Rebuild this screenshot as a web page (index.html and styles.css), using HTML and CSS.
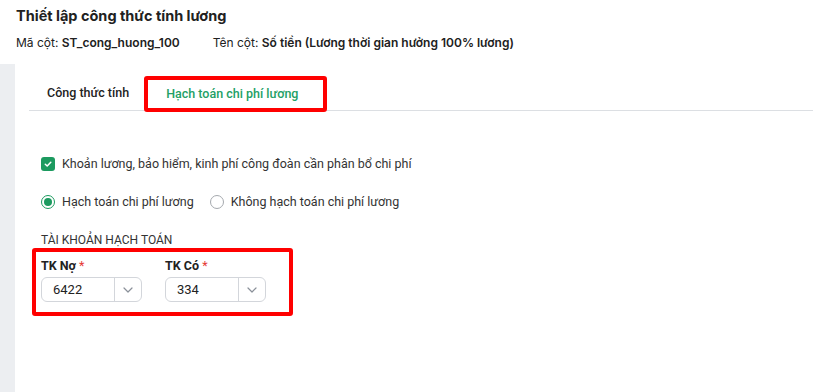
FILE: index.html
```html
<!DOCTYPE html>
<html>
<head>
	<title>Thiết lập công thức tính lương</title>
	<meta charset="utf-8">
	<link rel="stylesheet" href="styles.css">
</head>
<body>

	<div class="header">
		<h1 class="title">Thiết lập công thức tính lương</h1>
		<div class="meta">
			<span class="meta-item">Mã cột: <b>ST_cong_huong_100</b></span>
			<span class="meta-item">Tên cột: <b>Số tiền (Lương thời gian hưởng 100% lương)</b></span>
		</div>
	</div>

	<div class="main">
		<div class="strip"></div>
		<div class="panel">
			<div class="tabs">
				<div class="tab">Công thức tính</div>
				<div class="tab tab-active mark">Hạch toán chi phí lương</div>
			</div>

			<div class="content">
				<label class="check-row">
					<span class="checkbox">
						<svg width="10" height="10" viewBox="0 0 10 10"><path d="M2.3 5.2 L4.2 7 L7.8 3.2" fill="none" stroke="#fff" stroke-width="1.5" stroke-linecap="round" stroke-linejoin="round"/></svg>
					</span>
					Khoản lương, bảo hiểm, kinh phí công đoàn cần phân bổ chi phí
				</label>

				<div class="radio-row">
					<label class="radio-item"><span class="radio radio-on"></span>Hạch toán chi phí lương</label>
					<label class="radio-item"><span class="radio"></span>Không hạch toán chi phí lương</label>
				</div>

				<div class="section-label">TÀI KHOẢN HẠCH TOÁN</div>

				<div class="fields mark">
					<div class="field">
						<div class="field-label">TK Nợ <span class="req">*</span></div>
						<div class="select">
							<span class="select-value">6422</span>
							<span class="select-arrow">
								<svg width="10" height="6" viewBox="0 0 10 6"><path d="M1 1 L5 5 L9 1" fill="none" stroke="#8a9099" stroke-width="1.2" stroke-linecap="round" stroke-linejoin="round"/></svg>
							</span>
						</div>
					</div>
					<div class="field">
						<div class="field-label">TK Có <span class="req">*</span></div>
						<div class="select">
							<span class="select-value">334</span>
							<span class="select-arrow">
								<svg width="10" height="6" viewBox="0 0 10 6"><path d="M1 1 L5 5 L9 1" fill="none" stroke="#8a9099" stroke-width="1.2" stroke-linecap="round" stroke-linejoin="round"/></svg>
							</span>
						</div>
					</div>
				</div>
			</div>
		</div>
	</div>

</body>
</html>
```

FILE: styles.css
```css
body {
	margin: 0;
	font-family: Inter, "Noto Sans", sans-serif;
	color: #212121;
	background: #fff;
	height: 392px;
	overflow: hidden;
}

/* header */
.header { padding: 6px 16px 13px; }
.title { margin: 0 0 9px; font-size: 14.5px; line-height: 20px; font-weight: 700; }
.meta { display: flex; gap: 33px; font-size: 12px; line-height: 16px; }
.meta b { font-weight: 600; }

/* main area */
.main { display: flex; height: 328px; }
.strip { width: 15px; background: #eceef1; }
.panel { flex: 1; padding-top: 12px; font-family: Roboto, "Liberation Sans", sans-serif; }

.tabs {
	display: flex;
	align-items: flex-start;
	height: 34px;
	margin-left: 14px;
	border-bottom: 1px solid #dcdfe3;
}
.tab {
	padding: 0 15px 0 18px;
	font-size: 12.5px;
	line-height: 34px;
	font-weight: 500;
	color: #222;
}
.tab-active {
	color: #23a066;
	line-height: 28px;
	padding: 0 25px 0 18px;
}

/* red annotation frames */
.mark { border: 4px solid #f00; border-radius: 3px; }

.content { padding: 43px 0 0 26px; font-size: 12.5px; color: #333; }

.check-row { display: flex; align-items: center; gap: 7px; line-height: 20px; }
.checkbox {
	width: 14px; height: 14px; border-radius: 3px;
	background: #1c9a5f;
	display: flex; align-items: center; justify-content: center;
}

.radio-row { display: flex; gap: 16px; margin-top: 18px; line-height: 20px; }
.radio-item { display: flex; align-items: center; gap: 7px; }
.radio {
	width: 14px; height: 14px; box-sizing: border-box;
	border-radius: 50%; border: 1px solid #a5a9ae;
	display: flex; align-items: center; justify-content: center;
}
.radio-on { border-color: #1c9a5f; }
.radio-on::after { content: ""; width: 8px; height: 8px; border-radius: 50%; background: #1c9a5f; }

.section-label { margin-top: 20px; font-size: 12px; line-height: 16px; color: #333; }

.fields {
	display: inline-flex;
	gap: 23px;
	margin-left: -9px;
	padding: 6px 23px 10px 5px;
}
.field-label { font-size: 12.5px; line-height: 16px; font-weight: 700; color: #222; margin-bottom: 3px; }
.req { color: #e53935; font-weight: 400; }

.select {
	display: flex;
	width: 101px; height: 25px; box-sizing: border-box;
	border: 1px solid #d3d6db; border-radius: 6px;
	font-size: 13px; color: #222;
}
.select-value { flex: 1; padding-left: 11px; line-height: 23px; }
.select-arrow {
	width: 26px;
	border-left: 1px solid #d3d6db;
	display: flex; align-items: center; justify-content: center;
}
```
